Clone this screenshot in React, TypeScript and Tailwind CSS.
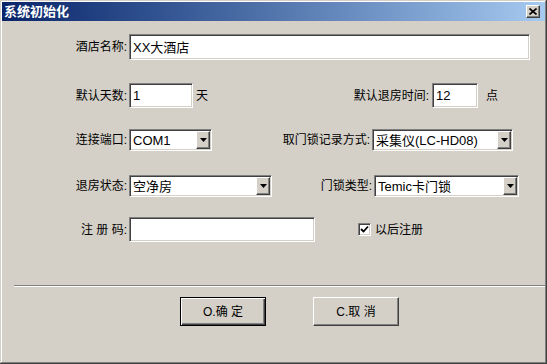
import React from "react";

// classic win2000 style dialog: 系统初始化

const sunken =
  "bg-white border border-[#808080] border-b-white border-r-white shadow-[inset_1px_1px_0_#404040,inset_-1px_-1px_0_#d4d0c8]";
const raised =
  "bg-[#d4d0c8] border border-white border-b-[#404040] border-r-[#404040] shadow-[inset_-1px_-1px_0_#808080,inset_1px_1px_0_#d4d0c8]";

function Label({ children, className = "" }: { children: React.ReactNode; className?: string }) {
  return <span className={`text-right whitespace-nowrap leading-none ${className}`}>{children}</span>;
}

function Field({ value = "", className = "" }: { value?: string; className?: string }) {
  return (
    <div className={`${sunken} flex items-center pl-[3px] text-[13px] leading-none ${className}`}>
      {value}
    </div>
  );
}

function Combo({ value, className = "" }: { value: string; className?: string }) {
  return (
    <div className={`${sunken} h-[22px] flex items-center p-[1px] ${className}`}>
      <span className="flex-1 pl-[2px] text-[13px] leading-none whitespace-nowrap">{value}</span>
      <div className={`${raised} w-[14px] h-full flex items-center justify-center`}>
        <svg width="7" height="4" viewBox="0 0 7 4">
          <polygon points="0,0 7,0 3.5,4" fill="#000" />
        </svg>
      </div>
    </div>
  );
}

export default function App() {
  return (
    <div className="w-[547px] h-[364px] bg-[#d4d0c8] p-[2px] flex flex-col text-black font-['Liberation_Sans','Noto_Sans_CJK_SC',sans-serif] shadow-[inset_-1px_-1px_0_#404040,inset_1px_1px_0_#d4d0c8,inset_-2px_-2px_0_#808080,inset_2px_2px_0_#fff]">
      {/* title bar */}
      <div className="h-[19px] flex items-center bg-linear-to-r from-[#0a246a] to-[#a6caf0] pl-[2px] pr-[5px]">
        <span className="text-white font-bold text-[13px] leading-none">系统初始化</span>
        <div className={`${raised} ml-auto w-[14px] h-[13px] flex items-center justify-center`}>
          <svg width="8" height="7" viewBox="0 0 8 7">
            <path d="M0.5 0.5 L7.5 6.5 M7.5 0.5 L0.5 6.5" stroke="#000" strokeWidth="1.6" />
          </svg>
        </div>
      </div>

      <div className="flex flex-col text-[12px]">
        {/* 酒店名称 */}
        <div className="mt-[13px] h-[26px] flex items-center">
          <Label className="w-[125px]">酒店名称:</Label>
          <Field className="ml-[2px] w-[401px] h-[26px]" value="XX大酒店" />
        </div>

        {/* 天数 / 退房时间 */}
        <div className="mt-[23px] h-[25px] flex items-center pr-[47px]">
          <Label className="w-[125px]">默认天数:</Label>
          <Field className="ml-[2px] w-[64px] h-[25px]" value="1" />
          <span className="ml-[3px] leading-none">天</span>
          <Label className="flex-1">默认退房时间:</Label>
          <Field className="ml-[3px] w-[46px] h-[25px]" value="12" />
          <span className="ml-[8px] leading-none">点</span>
        </div>

        {/* 端口 / 记录方式 */}
        <div className="mt-[21px] h-[22px] flex items-center pr-[32px]">
          <Label className="w-[125px]">连接端口:</Label>
          <Combo className="ml-[2px] w-[83px]" value="COM1" />
          <Label className="flex-1">取门锁记录方式:</Label>
          <Combo className="ml-[2px] w-[141px]" value="采集仪(LC-HD08)" />
        </div>

        {/* 退房状态 / 门锁类型 */}
        <div className="mt-[24px] h-[22px] flex items-center pr-[26px]">
          <Label className="w-[125px]">退房状态:</Label>
          <Combo className="ml-[2px] w-[143px]" value="空净房" />
          <Label className="flex-1">门锁类型:</Label>
          <Combo className="ml-[2px] w-[145px]" value="Temic卡门锁" />
        </div>

        {/* 注册码 */}
        <div className="mt-[20px] h-[25px] flex items-center">
          <Label className="w-[125px]">注 册 码:</Label>
          <Field className="ml-[2px] w-[186px] h-[25px]" />
          <div className={`${sunken} ml-[43px] w-[13px] h-[13px] flex items-center justify-center`}>
            <svg width="9" height="9" viewBox="0 0 9 9">
              <polyline points="1,4 3.5,6.5 8,1.5" fill="none" stroke="#000" strokeWidth="1.8" />
            </svg>
          </div>
          <span className="ml-[4px] leading-none">以后注册</span>
        </div>

        {/* separator */}
        <div className="mt-[43px] ml-[12px] h-[2px] border-t border-[#808080] border-b border-b-white" />

        {/* buttons */}
        <div className="mt-[10px] flex">
          <button className="ml-[178px] w-[86px] h-[29px] border border-black bg-[#d4d0c8] shadow-[inset_1px_1px_0_#fff,inset_-1px_-1px_0_#404040,inset_-2px_-2px_0_#808080] leading-none">
            O.确 定
          </button>
          <button className={`${raised} ml-[47px] w-[86px] h-[29px] leading-none`}>C.取 消</button>
        </div>
      </div>
    </div>
  );
}
